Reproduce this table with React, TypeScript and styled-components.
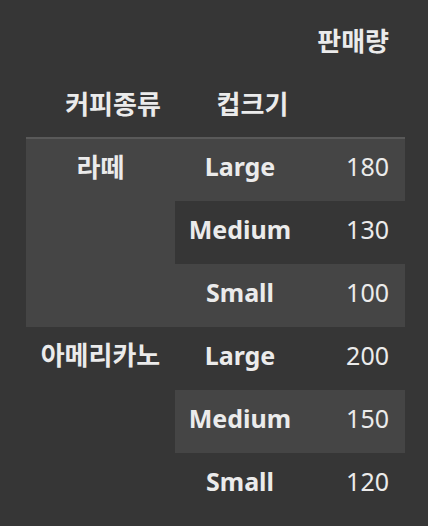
import React from "react";
import styled, { createGlobalStyle } from "styled-components";

const Global = createGlobalStyle`
  html, body { margin: 0; padding: 0; background: #363636; }
  body { font-family: "Noto Sans", "Noto Sans CJK KR", sans-serif; color: #ebebeb; }
`;

const Page = styled.div`
  padding: 12px 23px 0 26px;
`;

const Table = styled.table`
  border-collapse: collapse;
  width: 379px;
  table-layout: fixed;
  font-size: 25px;
  line-height: 30px;
`;

const Col = styled.col<{ $w: number }>`
  width: ${(p) => p.$w}px;
`;

const HeadRow = styled.tr<{ $line?: boolean }>`
  height: 63px;
  ${(p) => (p.$line ? "border-bottom: 2px solid #595959;" : "")}
`;

const Th = styled.th<{ $align?: "center" | "right" }>`
  font-size: 26px;
  font-weight: 700;
  padding: 0 ${(p) => (p.$align === "right" ? "16px" : "0")} 5px
    ${(p) => (p.$align === "right" ? "0" : "25px")};
  text-align: ${(p) => p.$align ?? "center"};
  vertical-align: middle;
`;

const Row = styled.tr<{ $alt: boolean }>`
  height: 63px;
  background: ${(p) => (p.$alt ? "#454545" : "transparent")};
`;

const GroupCell = styled.td<{ $alt: boolean }>`
  font-size: 26px;
  font-weight: 700;
  text-align: center;
  vertical-align: top;
  padding-top: 13px;
  background: ${(p) => (p.$alt ? "#454545" : "transparent")};
`;

const SizeCell = styled.td`
  font-weight: 700;
  text-align: center;
  vertical-align: middle;
  padding: 0 0 8px;
`;

const NumCell = styled.td`
  font-weight: 400;
  text-align: right;
  vertical-align: middle;
  padding: 0 16px 8px 0;
`;

const data = [
  { kind: "라떼", rows: [["Large", 180], ["Medium", 130], ["Small", 100]] },
  { kind: "아메리카노", rows: [["Large", 200], ["Medium", 150], ["Small", 120]] },
];

export default function App() {
  let idx = 0;
  return (
    <>
      <Global />
      <Page>
        <Table>
          <colgroup>
            <Col $w={149} />
            <Col $w={130} />
            <Col $w={100} />
          </colgroup>
          <thead>
            <HeadRow>
              <Th />
              <Th />
              <Th $align="right">판매량</Th>
            </HeadRow>
            <HeadRow $line>
              <Th>커피종류</Th>
              <Th>컵크기</Th>
              <Th />
            </HeadRow>
          </thead>
          <tbody>
            {data.map((g) =>
              g.rows.map(([size, n], i) => {
                const alt = idx % 2 === 0;
                idx++;
                return (
                  <Row key={g.kind + size} $alt={alt}>
                    {i === 0 && (
                      <GroupCell rowSpan={3} $alt={alt}>
                        {g.kind}
                      </GroupCell>
                    )}
                    <SizeCell>{size}</SizeCell>
                    <NumCell>{n}</NumCell>
                  </Row>
                );
              })
            )}
          </tbody>
        </Table>
      </Page>
    </>
  );
}
